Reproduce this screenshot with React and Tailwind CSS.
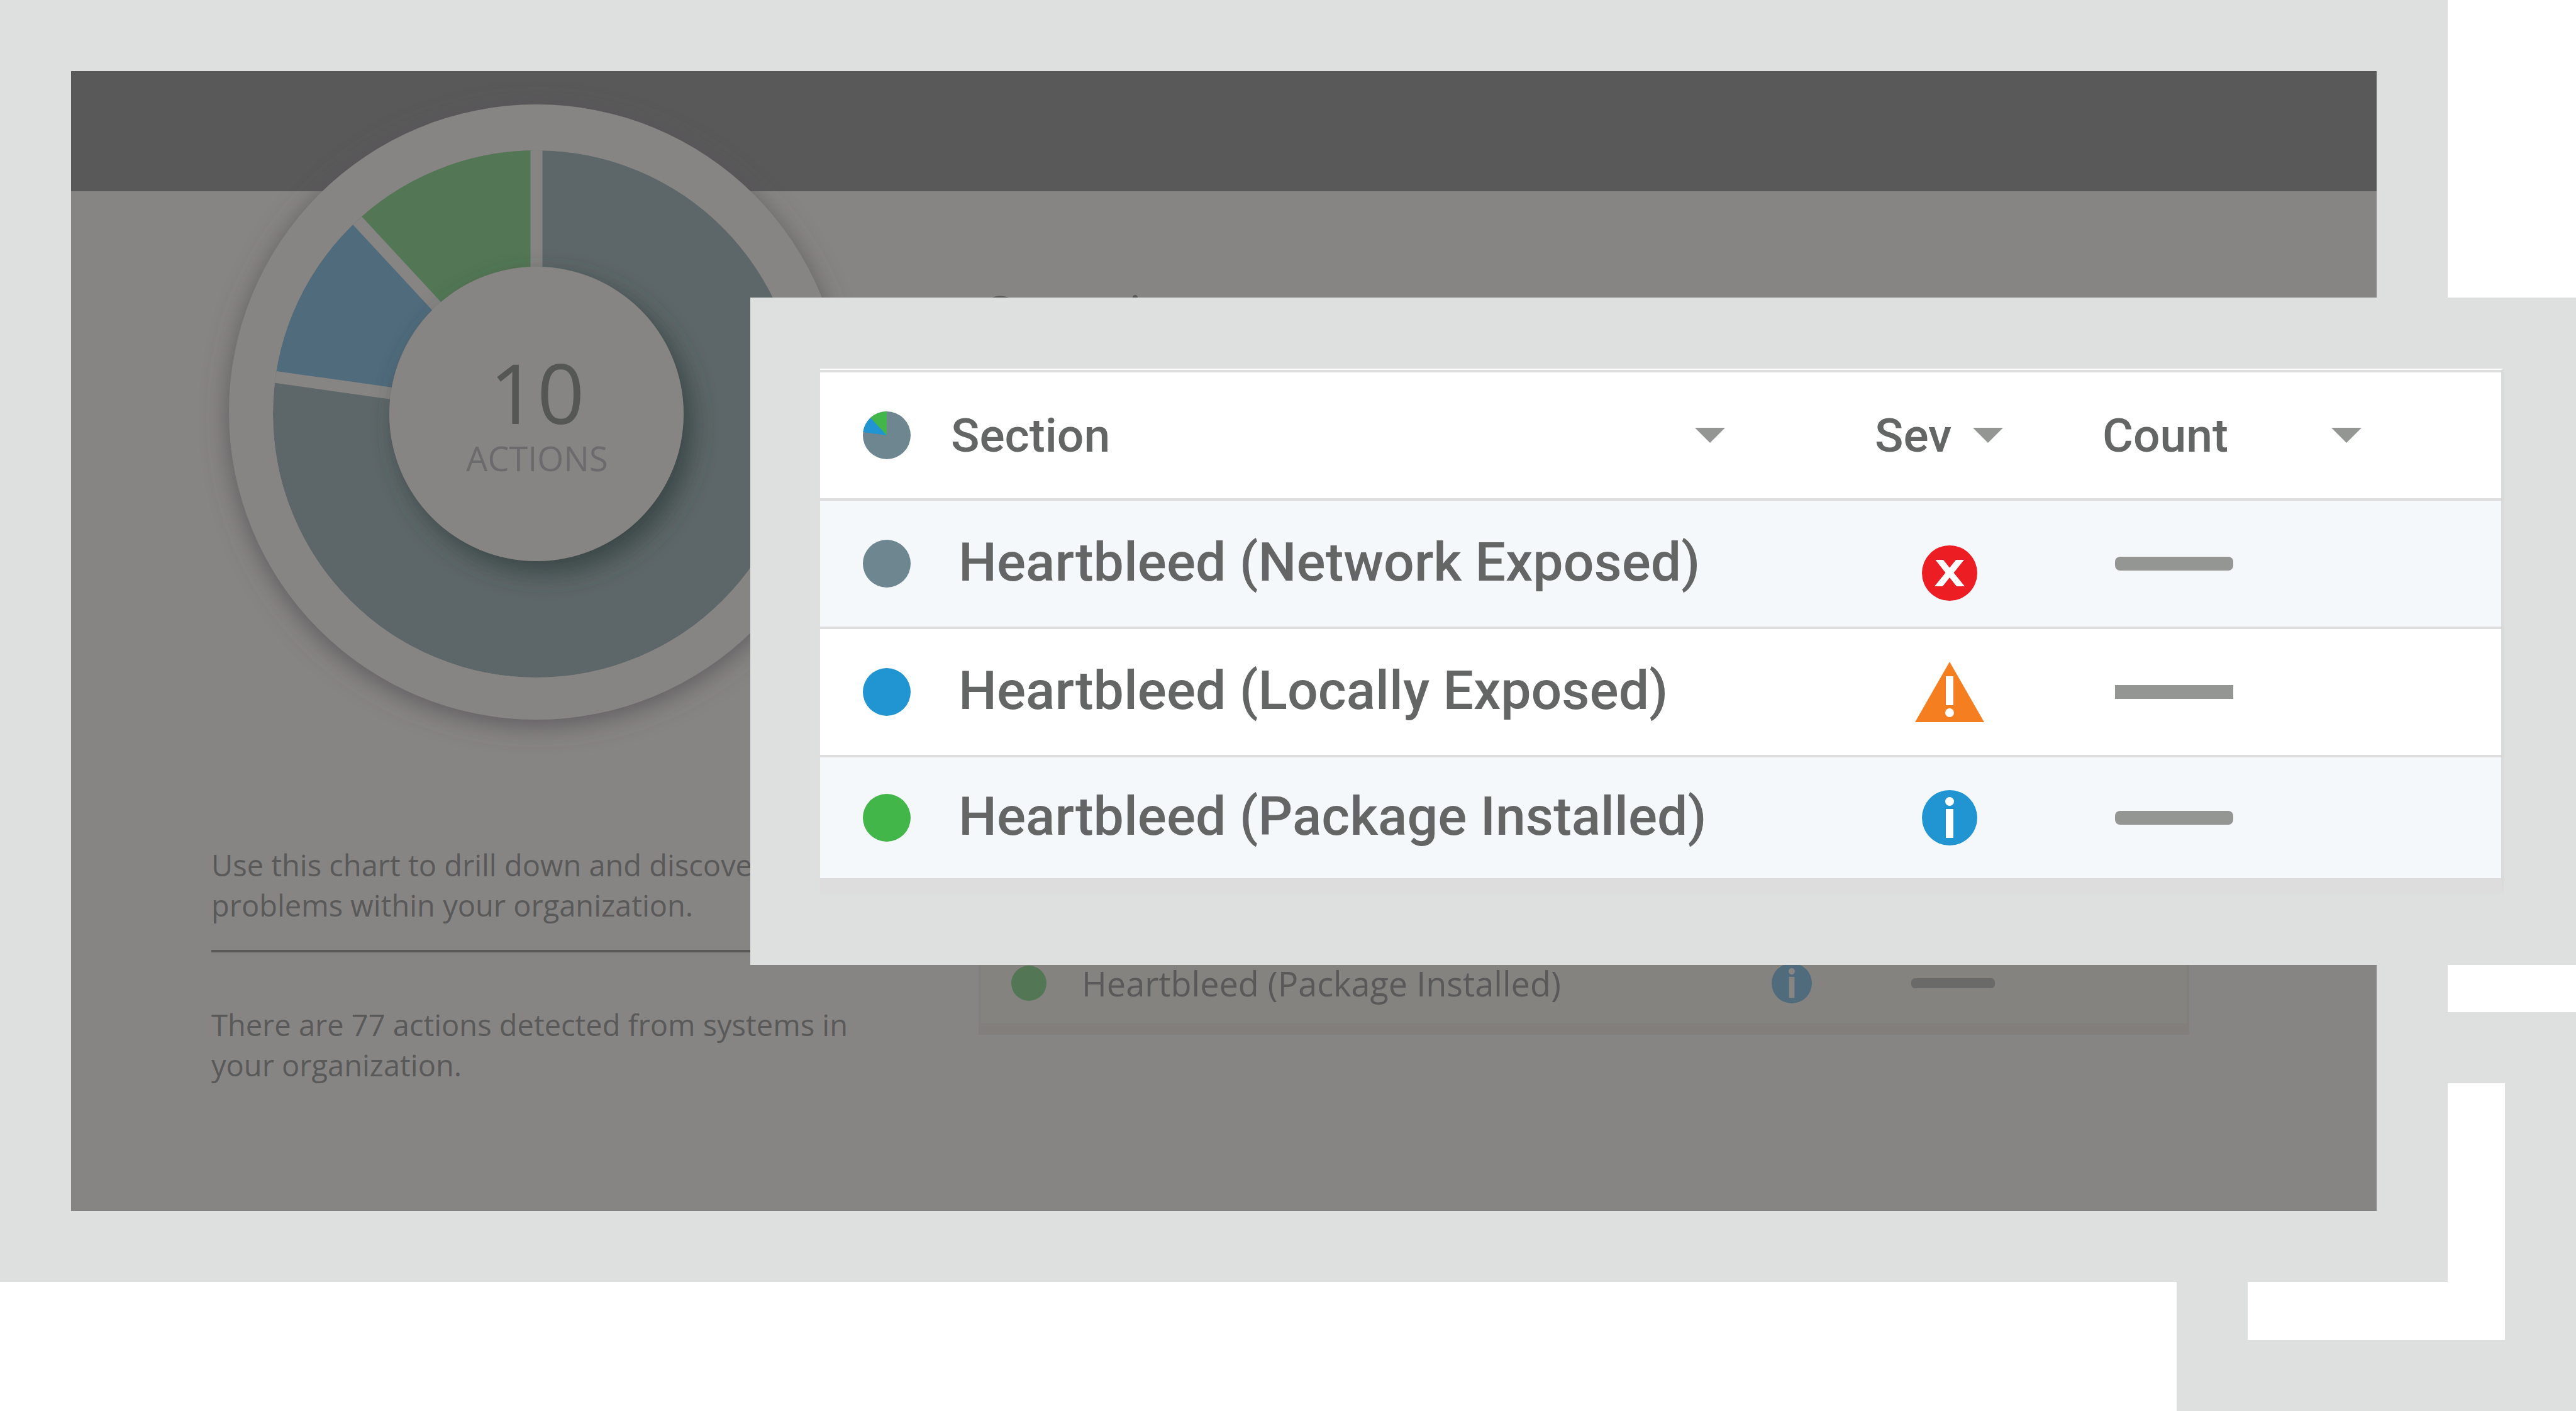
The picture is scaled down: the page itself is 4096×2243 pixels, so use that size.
const COLORS = { slate: "#6d868f", blue: "#2095d2", green: "#42b649" };

function Donut() {
  return (
    <svg viewBox="0 0 978 978" className="block w-[978px] h-[978px] overflow-visible" role="img" aria-label="Actions by section">
      <defs>
        <filter id="soft" x="-20%" y="-20%" width="140%" height="140%">
          <feDropShadow dx="0" dy="8" stdDeviation="20" floodColor="#565158" floodOpacity="0.85" />
        </filter>
        <filter id="hub" x="-30%" y="-30%" width="170%" height="170%">
          <feDropShadow dx="14" dy="18" stdDeviation="20" floodColor="#33403f" floodOpacity="0.85" />
        </filter>
        <clipPath id="ring">
          <circle cx="489" cy="492" r="419" />
        </clipPath>
      </defs>
      <circle cx="489" cy="489" r="489" fill="#878583" filter="url(#soft)" />
      <g clipPath="url(#ring)">
        <circle cx="489" cy="492" r="419" fill="#5d6668" />
        <path d="M489 492 L-205 394 L-50 -88 Z" fill="#506b7c" />
        <path d="M489 492 L-55 -95 L489 -308 Z" fill="#537754" />
        <g stroke="#878583" strokeWidth="19">
          <path d="M489 492 V0" />
          <path d="M489 492 L-55 -95" />
          <path d="M489 492 L-303 380" />
        </g>
      </g>
      <circle cx="489" cy="492" r="234" fill="#878583" filter="url(#hub)" />
      <text x="490" y="508" textAnchor="middle" fontSize="132" fill="#555755">10</text>
      <text x="490" y="583" textAnchor="middle" fontSize="54" fill="#6b6b6d">ACTIONS</text>
    </svg>
  );
}

function Pie() {
  return (
    <svg viewBox="0 0 76 76" className="block size-[76px]" role="img" aria-label="All sections">
      <circle cx="38" cy="38" r="38" fill="#6d868f" />
      <path d="M38 38 L0.4 32.7 A38 38 0 0 1 12.2 10.1 Z" fill="#2095d2" />
      <path d="M38 38 L12.2 10.1 A38 38 0 0 1 38 0 Z" fill="#42b649" />
    </svg>
  );
}

function Caret() {
  return (
    <svg viewBox="0 0 48 24" className="block w-12 h-6" aria-hidden="true">
      <path d="M0 0 H48 L24 24 Z" fill="#949693" />
    </svg>
  );
}

function ErrorIcon() {
  return (
    <svg viewBox="0 0 110 120" className="block w-[110px] h-[120px]" role="img" aria-label="Critical">
      <circle cx="55" cy="75" r="44" fill="#ed1d24" />
      <path d="M32.500 54 H45 L55 66.500 L65 54 H78 L61.500 74.500 L79 96 H66 L55 82 L44 96 H31 L48.500 74.500 Z" fill="#fff" />
    </svg>
  );
}

function WarningIcon() {
  return (
    <svg viewBox="0 0 110 120" className="block w-[110px] h-[120px]" role="img" aria-label="Warning">
      <path d="M55 12 L110 108 H0 Z" fill="#f57e20" />
      <path d="M49 35 H61 V81 H49 Z" fill="#fff" />
      <circle cx="55" cy="93" r="7" fill="#fff" />
    </svg>
  );
}

function InfoIcon({ className, fill, mark }) {
  return (
    <svg viewBox="11 16 88 88" className={className} role="img" aria-label="Info">
      <circle cx="55" cy="60" r="44" fill={fill} />
      <circle cx="55" cy="34" r="7" fill={mark} />
      <path d="M49 46 H61 V92 H49 Z" fill={mark} />
    </svg>
  );
}

const rows = [
  {
    name: "Heartbleed (Network Exposed)",
    color: COLORS.slate,
    icon: <ErrorIcon />,
    row: "h-[204px] bg-[#f4f8fb]",
    dash: "rounded-lg",
  },
  {
    name: "Heartbleed (Locally Exposed)",
    color: COLORS.blue,
    icon: <WarningIcon />,
    row: "h-[204px] bg-white",
    dash: "",
  },
  {
    name: "Heartbleed (Package Installed)",
    color: COLORS.green,
    icon: <InfoIcon className="block size-[88px] ml-[11px]" fill="#2095d2" mark="#fff" />,
    row: "h-[194px] bg-[#f4f8fb]",
    dash: "rounded-lg",
  },
];

function SectionTable() {
  return (
    <table className="w-full table-fixed border-collapse text-left text-[#646665]">
      <colgroup>
        <col className="w-[208px]" />
        <col />
        <col className="w-[364px]" />
        <col className="w-[638px]" />
      </colgroup>
      <thead>
        <tr className="h-[204px] bg-white border-t-4 border-[#dddddd] text-[75px] leading-[80px]">
          <th className="p-0 pl-[68px]">
            <Pie />
          </th>
          <th className="p-0 pr-[232px] font-medium">
            <button className="flex w-full items-center justify-between">
              Section <Caret />
            </button>
          </th>
          <th className="p-0 pl-1.5 font-medium">
            <button className="flex w-[204px] items-center justify-between">
              Sev <Caret />
            </button>
          </th>
          <th className="p-0 pl-1 font-medium">
            <button className="flex w-[412px] items-center justify-between">
              Count <Caret />
            </button>
          </th>
        </tr>
      </thead>
      <tbody>
        {rows.map((r) => (
          <tr key={r.name} className={"border-t-4 border-[#dddddd] " + r.row}>
            <td className="p-0 pl-[68px]">
              <div className="size-[76px] rounded-full" style={{ backgroundColor: r.color }} />
            </td>
            <td className="p-0 pl-3 pb-1 text-[86px] leading-[96px] font-medium whitespace-nowrap">{r.name}</td>
            <td className="p-0 pl-[70px]">{r.icon}</td>
            <td className="p-0 pl-6">
              <div className={"h-[22px] w-[188px] bg-[#949693] " + r.dash} />
            </td>
          </tr>
        ))}
      </tbody>
    </table>
  );
}

export default function App() {
  return (
    <div className="relative min-h-[2243px] w-full overflow-hidden bg-white">
      <div className="absolute right-0 top-[1609px] h-[634px] w-[635px] border-[113px] border-[#dee0df]" />

      <main className="relative mr-[204px] border-[113px] border-[#dee0df] bg-[#878583] font-['Open_Sans',sans-serif] text-[#595959]">
        <header className="h-[191px] bg-[#595959]" />
        <div className="flex h-[1621px] items-start pl-[223px] pr-[298px]">
          <section className="w-[1034px] text-[47px] leading-[64px]">
            <div className="-mt-[138px] flex justify-center">
              <Donut />
            </div>
            <p className="mt-[199px]">
              Use this chart to drill down and discover
              <br />
              problems within your organization.
            </p>
            <hr className="mt-[39px] border-t-4 border-[#595959]" />
            <p className="mt-[83px]">
              There are 77 actions detected from systems in
              <br />
              your organization.
            </p>
          </section>
          <section className="ml-[186px] flex-1">
            <h1 className="mt-[136px] pl-2 text-[88px] leading-[120px] text-[#555755]">Security</h1>
            <table className="mt-[938px] w-full table-fixed border-collapse border-x-4 border-b-[18px] border-x-[#82807e] border-b-[#827e7c] bg-[#858380] text-left">
              <colgroup>
                <col className="w-[162px]" />
                <col />
                <col className="w-[222px]" />
                <col className="w-[440px]" />
              </colgroup>
              <tbody>
                <tr className="h-[138px]">
                  <td className="p-0 pl-12">
                    <div className="size-14 rounded-full bg-[#537754]" />
                  </td>
                  <td className="p-0 text-[54px] leading-[60px] whitespace-nowrap">Heartbleed (Package Installed)</td>
                  <td className="p-0">
                    <InfoIcon className="block size-16" fill="#506b7c" mark="#878583" />
                  </td>
                  <td className="p-0">
                    <div className="h-4 w-[133px] rounded-md bg-[#6a6a68]" />
                  </td>
                </tr>
              </tbody>
            </table>
          </section>
        </div>
      </main>

      <div className="absolute left-[1193px] right-0 top-[473px] bg-[#dee0df] p-[113px] pl-[111px] pr-[115px] font-['Roboto',sans-serif]">
        <div className="border-b-[25px] border-r-4 border-t-2 border-b-[#dddddd] border-r-[#d9dbda] border-t-white">
          <SectionTable />
        </div>
      </div>
    </div>
  );
}
